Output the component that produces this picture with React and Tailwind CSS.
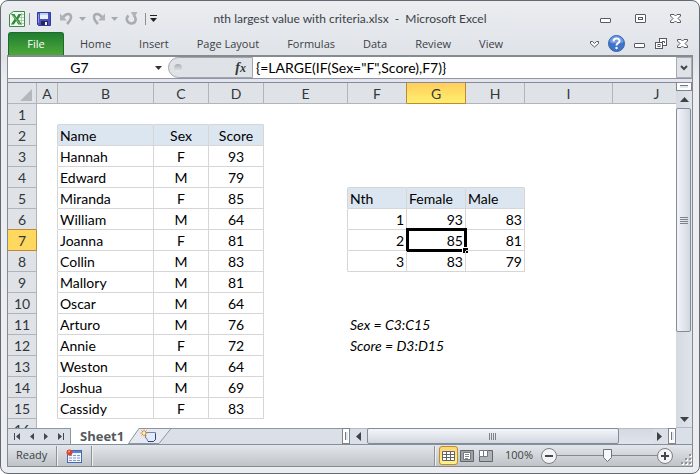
import { Fragment } from 'react';

const columns = [
  { id: 'A', width: 'w-[21px]' },
  { id: 'B', width: 'w-[96px]' },
  { id: 'C', width: 'w-[55px]' },
  { id: 'D', width: 'w-[55px]' },
  { id: 'E', width: 'w-[84px]' },
  { id: 'F', width: 'w-[59px]' },
  { id: 'G', width: 'w-[59px]' },
  { id: 'H', width: 'w-[59px]' },
  { id: 'I', width: 'w-[88px]' },
  { id: 'J', width: 'w-[88px]' },
];

const people = [
  ['Hannah', 'F', 93],
  ['Edward', 'M', 79],
  ['Miranda', 'F', 85],
  ['William', 'M', 64],
  ['Joanna', 'F', 81],
  ['Collin', 'M', 83],
  ['Mallory', 'M', 81],
  ['Oscar', 'M', 64],
  ['Arturo', 'M', 76],
  ['Annie', 'F', 72],
  ['Weston', 'M', 64],
  ['Joshua', 'M', 69],
  ['Cassidy', 'F', 83],
];

const ranking = [
  [1, 93, 83],
  [2, 85, 81],
  [3, 83, 79],
];

const cells = {};
const put = (ref, text, align, extra = {}) => {
  cells[ref] = { text, align, boxed: true, ...extra };
};

put('B2', 'Name', 'text-left', { head: true });
put('C2', 'Sex', 'text-center', { head: true });
put('D2', 'Score', 'text-center', { head: true });
people.forEach(([name, sex, score], i) => {
  put(`B${i + 3}`, name, 'text-left');
  put(`C${i + 3}`, sex, 'text-center');
  put(`D${i + 3}`, score, 'text-center');
});
put('F5', 'Nth', 'text-left', { head: true });
put('G5', 'Female', 'text-left', { head: true });
put('H5', 'Male', 'text-left', { head: true });
ranking.forEach((row, i) => {
  ['F', 'G', 'H'].forEach((col, j) => put(`${col}${i + 6}`, row[j], 'text-right'));
});
put('F11', 'Sex = C3:C15', 'text-left', { boxed: false, note: true });
put('F12', 'Score = D3:D15', 'text-left', { boxed: false, note: true });

const isBoxed = (col, row) => Boolean(columns[col] && cells[columns[col].id + row]?.boxed);

const Cell = ({ col, row }) => {
  const ref = columns[col].id + row;
  const cell = cells[ref];
  const right = isBoxed(col, row) || isBoxed(col + 1, row);
  const bottom = isBoxed(col, row) || isBoxed(col, row + 1);
  return (
    <td
      className={[
        'relative h-[21px] border-r border-b px-0.5 pt-0.5 pb-0 leading-[18px] whitespace-nowrap',
        right ? 'border-r-[#d6d6d6]' : 'border-r-transparent',
        bottom ? 'border-b-[#d6d6d6]' : 'border-b-transparent',
        cell?.head ? 'bg-[#dce6f1]' : '',
        cell?.note ? 'italic' : '',
        cell?.align ?? '',
      ].join(' ')}
    >
      {cell?.text}
      {ref === 'G7' && (
        <span className="absolute -top-0.5 -right-0.5 -bottom-0.5 -left-px border-3 border-black">
          <span className="absolute -right-1 -bottom-1 h-1.5 w-1.5 border-t border-l border-white bg-black" />
        </span>
      )}
    </td>
  );
};

const rowHeadClass = (row) => {
  if (row === 7) return 'bg-[#ffd860] border-r-[#c08a35] border-b-[#c08a35]';
  if (row === 6) return 'bg-[#dfe3e8] border-r-[#b1b5ba] border-b-[#c08a35]';
  return 'bg-[#dfe3e8] border-r-[#b1b5ba] border-b-[#b1b5ba]';
};

const colHeadClass = (id) => {
  if (id === 'G') return 'bg-linear-to-b from-[#ffce5c] to-[#ffef70] border-r-[#c08a35] border-b-[#c08a35]';
  if (id === 'F') return 'bg-[#dfe3e8] border-r-[#c08a35] border-b-[#b1b5ba]';
  return 'bg-[#dfe3e8] border-r-[#b1b5ba] border-b-[#b1b5ba]';
};

const Sheet = () => (
  <div className="min-w-0 flex-1 overflow-hidden bg-white">
    <table className="w-[693px] table-fixed border-separate border-spacing-0 font-['Lato',sans-serif] text-sm text-black">
      <thead>
        <tr className="text-[#33373c]">
          <th className="h-[21px] w-[29px] border-r border-b border-[#b1b5ba] bg-[#dfe3e8] p-0" aria-label="Select all">
            <svg className="mt-1 ml-3" width="12" height="12" aria-hidden="true">
              <path d="M12 0v12H0z" fill="#b4b8be" />
            </svg>
          </th>
          {columns.map(({ id, width }) => (
            <th key={id} scope="col" className={`h-[21px] border-r border-b p-0 pt-0.5 leading-[18px] font-normal ${width} ${colHeadClass(id)}`}>
              {id}
            </th>
          ))}
        </tr>
      </thead>
      <tbody>
        {Array.from({ length: 16 }, (_, i) => i + 1).map((row) => (
          <tr key={row}>
            <th scope="row" className={`h-[21px] border-r border-b p-0 pt-0.5 leading-[18px] font-normal text-[#33373c] ${rowHeadClass(row)}`}>
              {row}
            </th>
            {columns.map(({ id }, col) => (
              <Cell key={id} col={col} row={row} />
            ))}
          </tr>
        ))}
      </tbody>
    </table>
  </div>
);

const ExcelIcon = () => (
  <svg width="16" height="16" viewBox="0 0 16 16" aria-hidden="true">
    <path d="M4.500.5h11v15h-15v-12z" fill="#f4faf2" stroke="#3c8a4b" />
    <path d="M12.500 2v12M10 3.500h5M10 6.500h5M10 9.500h5M10 12.500h5" stroke="#a9cfa8" fill="none" />
    <path d="M2 3h3.500l2 3.500L9.500 3h3L9.200 8l3.600 5.500H9.300L7.200 10 5 13.500H1.800L5.500 8z" fill="#2f8a3d" />
    <path d="M3.500 4 10.500 12.500" stroke="#8ccf6d" strokeWidth="1" />
  </svg>
);

const SaveIcon = () => (
  <svg width="14" height="14" viewBox="0 0 14 14" aria-hidden="true">
    <path d="M.5.5h13v13h-12l-1-1z" fill="#4a52bd" stroke="#343a9a" />
    <path d="M3 1h8v6H3z" fill="#e8f0fb" />
    <path d="M3 1h8v2H3z" fill="#b8d2f2" />
    <path d="M4 9h7v4H4z" fill="#23275c" />
    <path d="M8 10h2v3H8z" fill="#f2f4fa" />
    <path d="M1 2h1v9H1z" fill="#8d95e6" />
  </svg>
);

const UndoIcon = ({ flip }) => (
  <svg width="13" height="13" viewBox="0 0 13 13" className={flip ? '-scale-x-100' : ''} aria-hidden="true">
    <path d="M3 5.500C6 1 11 1 11 5c0 2.500-1.500 4.500-4 7" fill="none" stroke="#a9acb1" strokeWidth="2.600" />
    <path d="M0 1.500v7h7z" fill="#b0b3b8" />
  </svg>
);

const RepeatIcon = () => (
  <svg width="13" height="13" viewBox="0 0 13 13" aria-hidden="true">
    <path d="M3.500 3.500C0 7 2.500 11.500 6.500 11.500S12 7 9 3.500" fill="none" stroke="#a9acb1" strokeWidth="2.600" />
    <path d="M6 0h6.500L9 6z" fill="#b0b3b8" />
  </svg>
);

const Down = ({ className }) => (
  <svg width="7" height="4" viewBox="0 0 7 4" className={className} aria-hidden="true">
    <path d="M0 0h7L3.500 4z" fill="currentColor" />
  </svg>
);

const MinimizeIcon = () => (
  <svg width="12" height="12" viewBox="0 0 12 12" fill="#fff" stroke="#565a66" aria-hidden="true">
    <rect x=".5" y="5.500" width="10" height="4" rx=".5" />
  </svg>
);

const MaximizeIcon = () => (
  <svg width="12" height="12" viewBox="0 0 12 12" fill="#fff" stroke="#565a66" aria-hidden="true">
    <rect x=".5" y="1.500" width="10" height="8" rx=".5" />
    <rect x="3.500" y="4.500" width="4" height="2" />
  </svg>
);

const RestoreIcon = () => (
  <svg width="13" height="12" viewBox="0 0 13 12" fill="#fff" stroke="#565a66" aria-hidden="true">
    <rect x="4.500" y=".5" width="7" height="7" />
    <path d="M7 3.500h2.500V5" fill="none" />
    <rect x=".5" y="4.500" width="7" height="6" />
    <rect x="3" y="6.500" width="2" height="2" />
  </svg>
);

const CloseIcon = () => (
  <svg width="12" height="12" viewBox="0 0 12 12" fill="#fff" stroke="#565a66" aria-hidden="true">
    <path d="M.5 1.500h3.500L5.500 3 7 1.500h3.500v1.500l-2.500 2.500 2.500 2.500v1.500H7L5.500 8 4 9.500H.5V8L3 5.500.5 3z" />
  </svg>
);

const ChevronIcon = () => (
  <svg width="9" height="8" viewBox="0 0 9 8" fill="#fff" stroke="#565a66" aria-hidden="true">
    <path d="M.5 1.500h2l2 2 2-2h2v2l-4 3.500-4-3.500z" />
  </svg>
);

const HelpIcon = () => (
  <svg width="17" height="17" viewBox="0 0 17 17" aria-hidden="true">
    <circle cx="8.500" cy="8.500" r="8" fill="#3f74c8" stroke="#3563b0" />
    <path d="M1.500 7a7 6 0 0 1 14 0c-4 2-10 2-14 0z" fill="#6d9ae0" />
    <path d="M5.500 6.500c0-4 6-4 6-.5 0 2-3 2-3 4.500" fill="none" stroke="#fff" strokeWidth="2" />
    <circle cx="8.500" cy="13" r="1.200" fill="#fff" />
  </svg>
);

const TitleBar = () => (
  <header className="grid h-[31px] grid-cols-[1fr_auto_1fr] items-center pt-1 text-[#3b3f46]">
    <div className="flex items-center pl-0.5">
      <ExcelIcon />
      <span className="ml-1 h-3 w-px bg-[#8a8e95]" />
      <button className="ml-[7px]" aria-label="Save"><SaveIcon /></button>
      <button className="ml-[9px]" aria-label="Undo"><UndoIcon /></button>
      <button className="ml-1.5 text-[#a6a9ae]" aria-label="Undo list"><Down /></button>
      <button className="ml-1.5" aria-label="Redo"><UndoIcon flip /></button>
      <button className="ml-1.5 text-[#a6a9ae]" aria-label="Redo list"><Down /></button>
      <button className="ml-[7px]" aria-label="Repeat"><RepeatIcon /></button>
      <span className="ml-[7px] h-3 w-px bg-[#8a8e95]" />
      <button className="ml-1" aria-label="Customize toolbar">
        <svg width="7" height="7" viewBox="0 0 7 7" aria-hidden="true">
          <path d="M0 0h7v1H0zM0 3h7L3.500 7z" fill="#222" />
        </svg>
      </button>
    </div>
    <h1 className="font-['Lato',sans-serif] text-xs whitespace-nowrap">
      nth largest value with criteria.xlsx&nbsp; -&nbsp; Microsoft Excel
    </h1>
    <div className="flex items-center justify-end gap-[23px] pr-[11px]">
      <button aria-label="Minimize"><MinimizeIcon /></button>
      <button aria-label="Maximize"><MaximizeIcon /></button>
      <button aria-label="Close"><CloseIcon /></button>
    </div>
  </header>
);

const RibbonTabs = () => (
  <nav className="flex h-[23px] items-center pl-px text-[11px] text-[#3b3f46]">
    <button className="mr-0.5 h-full w-14 rounded-t-[3px] border border-b-0 border-[#1c6b2c] bg-linear-to-b from-[#1f7e30] to-[#4da83a] text-white">
      File
    </button>
    {['Home', 'Insert', 'Page Layout', 'Formulas', 'Data', 'Review', 'View'].map((tab) => (
      <button key={tab} className="px-3.5 pt-0.5 whitespace-nowrap">{tab}</button>
    ))}
    <div className="ml-auto flex items-center gap-[9px] pr-1">
      <button aria-label="Collapse ribbon"><ChevronIcon /></button>
      <button aria-label="Help"><HelpIcon /></button>
      <button aria-label="Minimize workbook"><MinimizeIcon /></button>
      <button aria-label="Restore workbook"><RestoreIcon /></button>
      <button aria-label="Close workbook"><CloseIcon /></button>
    </div>
  </nav>
);

const FormulaBar = () => (
  <div className="flex h-[22px] border-b border-[#9296a0] bg-white font-['Lato',sans-serif] text-sm text-black">
    <input aria-label="Name box" defaultValue="G7" className="w-[143px] text-center outline-none" />
    <button aria-label="Named ranges" className="w-[17px] text-[#333]"><Down className="ml-1" /></button>
    <div className="flex w-[85px] items-center justify-between rounded-l-full border border-[#a2a6ac] bg-[#dfe3e8] pr-1.5 pl-[5px]">
      <span className="h-2 w-2 rounded-full bg-linear-to-b from-[#a9adb3] to-[#eceef1]" />
      <button aria-label="Insert function" className="font-['Liberation_Serif',serif] text-sm leading-4 font-bold text-[#33373c] italic">
        f<span className="text-xs">x</span>
      </button>
    </div>
    <input
      aria-label="Formula"
      defaultValue={'{=LARGE(IF(Sex="F",Score),F7)}'}
      className="min-w-0 flex-1 pl-[3px] outline-none"
    />
    <button aria-label="Expand formula bar" className="w-4 border border-[#a9adb3] bg-[#dfe3e8]">
      <svg className="mx-auto" width="8" height="6" viewBox="0 0 8 6" aria-hidden="true">
        <path d="M1 1l3 3 3-3" fill="none" stroke="#44484e" strokeWidth="2" />
      </svg>
    </button>
  </div>
);

const VerticalScroll = () => (
  <div className="flex w-4 flex-col border-b border-[#b4bac4] bg-linear-to-r from-[#d5dae1] to-[#e0e4ec]">
    <div className="flex h-2 justify-center border border-t-0 border-[#80848c] bg-white pt-0.5">
      <span className="h-[3px] w-2 border-t border-[#777] bg-[#e4e6f4]" />
    </div>
    <button aria-label="Scroll up" className="flex h-[17px] items-center justify-center">
      <svg width="9" height="5" aria-hidden="true"><path d="M4.500 0 9 5H0z" fill="#3e4146" /></svg>
    </button>
    <div className="min-h-0 flex-1">
      <div className="mr-px flex h-[74%] flex-col items-center justify-center gap-px rounded-[2px] border border-[#838d99] bg-linear-to-r from-[#f3f5f9] to-[#d3d8e0]">
        {[0, 1, 2, 3].map((i) => <span key={i} className="h-px w-2 bg-[#7d8289]" />)}
      </div>
    </div>
    <button aria-label="Scroll down" className="flex h-4 items-center justify-center">
      <svg width="9" height="5" aria-hidden="true"><path d="M0 0h9L4.500 5z" fill="#3e4146" /></svg>
    </button>
  </div>
);

const navIcons = [
  { label: 'First sheet', d: 'M0 0h1v7H0zM6 0v7L2 3.500z' },
  { label: 'Previous sheet', d: 'M5 0v7L1 3.500z' },
  { label: 'Next sheet', d: 'M1 0v7l4-3.500z' },
  { label: 'Last sheet', d: 'M5 0h1v7H5zM0 0v7l4-3.500z' },
];

const SplitHandle = () => (
  <div className="flex w-2 items-center justify-center border border-[#80848c] bg-white">
    <span className="h-2 w-[3px] border-l border-[#777] bg-[#e4e6f4]" />
  </div>
);

const SheetTabs = () => (
  <div className="flex h-4 bg-[#dbe0e8]">
    <div className="flex w-[334px] max-w-1/2 shrink-0 border-t border-[#8d97a3]">
      <div className="flex w-[63px] items-center justify-between border-r border-[#8d97a3] px-1.5">
        {navIcons.map(({ label, d }) => (
          <button key={label} aria-label={label}>
            <svg width="6" height="7" viewBox="0 0 6 7" aria-hidden="true"><path d={d} fill="#44484e" /></svg>
          </button>
        ))}
      </div>
      <button className="-mt-px bg-white pl-[9px] text-[13px] leading-4 font-bold text-[#55595e]">Sheet1</button>
      <button aria-label="Insert worksheet" className="-mt-px h-4">
        <svg width="52" height="16" viewBox="0 0 52 16" aria-hidden="true">
          <path d="M0 0h15L4 16H0z" fill="#fff" />
          <path d="M15 .5 4.500 15.500H35L47 .5z" fill="#e6eaf0" stroke="#8d97a3" />
          <path d="M21.500 4.500h10v7l-2 2h-5.500l-1.500-3.500h-1z" fill="#e3eafa" stroke="#7586b5" />
          <path d="M24 13.500h5.500l2-2v-6" fill="none" stroke="#32447d" />
          <path d="M20 1.500v7M16.500 5h7M17.500 2.500l5 5M22.500 2.500l-5 5" stroke="#d88a1c" />
          <circle cx="20" cy="5" r="1.500" fill="#fff0b0" />
        </svg>
      </button>
    </div>
    <div className="flex min-w-0 flex-1">
      <SplitHandle />
      <button aria-label="Scroll left" className="flex w-[17px] items-center justify-center border-t border-[#b4bac4]">
        <svg width="5" height="9" aria-hidden="true"><path d="M5 0v9L0 4.500z" fill="#3e4146" /></svg>
      </button>
      <div className="flex flex-1 border-t border-[#b4bac4] bg-linear-to-b from-[#d5dae1] to-[#e0e4ec]">
        <div className="-mt-px flex w-[88%] items-center justify-center gap-px rounded-[2px] border border-[#838d99] bg-linear-to-b from-[#f3f5f9] to-[#d3d8e0]">
          {[0, 1, 2, 3].map((i) => <span key={i} className="h-[7px] w-px bg-[#7d8289]" />)}
        </div>
      </div>
      <button aria-label="Scroll right" className="flex w-[15px] items-center border-t border-[#b4bac4] pl-1">
        <svg width="5" height="9" aria-hidden="true"><path d="M0 0v9l5-4.500z" fill="#3e4146" /></svg>
      </button>
      <SplitHandle />
    </div>
    <div className="w-4" />
  </div>
);

const StatusDivider = () => <span className="h-5 w-0.5 border-l border-[#8d9299] bg-[#eef0f3]" />;

const MacroIcon = () => (
  <svg width="16" height="14" viewBox="0 0 16 14" aria-hidden="true">
    <rect x="1.500" y="1.500" width="14" height="12" fill="#f3f6fc" stroke="#4668ad" />
    <path d="M2 2h13v2H2z" fill="#5a83d0" />
    <path d="M3 6.500h11M3 9h11M3 11.500h11" stroke="#8297c4" strokeDasharray="3 1" />
    <circle cx="3.500" cy="3.500" r="3" fill="#d9472f" />
    <circle cx="3" cy="2.500" r="1" fill="#f3a08e" />
  </svg>
);

const StatusBar = () => (
  <footer className="flex h-[22px] items-center border-t border-[#858f9b] bg-linear-to-b from-[#e3e6ea] to-[#bfc4c9] text-[11px] text-[#3b3f46]">
    <span className="w-12 pl-2">Ready</span>
    <StatusDivider />
    <button aria-label="Record macro" className="mr-[9px] ml-2"><MacroIcon /></button>
    <StatusDivider />
    <div className="ml-auto flex items-center">
      <StatusDivider />
      <button aria-label="Normal view" className="ml-[3px] flex h-[19px] w-[19px] items-center justify-center rounded-[3px] border border-[#c28c2c] bg-linear-to-b from-[#fcd675] to-[#fff18a]">
        <svg width="13" height="10" viewBox="0 0 13 10" aria-hidden="true">
          <path d="M.5.5h12v9H.5zM.5 3.500h12M.5 6.500h12M4.500.5v9M8.500.5v9" fill="#fff" stroke="#62656a" />
        </svg>
      </button>
      <button aria-label="Page layout view" className="ml-0.5">
        <svg width="14" height="12" viewBox="0 0 14 12" aria-hidden="true">
          <path d="M.5.5h13v11H.5z" fill="#9ea3a9" stroke="#62656a" />
          <path d="M3.500 2.500h7v7h-7z" fill="#fff" stroke="#77797e" />
          <path d="M5 4.500h4M5 6.500h4M5 8.500h3" stroke="#888" />
        </svg>
      </button>
      <button aria-label="Page break preview" className="ml-[5px]">
        <svg width="14" height="12" viewBox="0 0 14 12" aria-hidden="true">
          <path d="M.5.5h13v11H.5z" fill="#aeb3b9" stroke="#62656a" />
          <path d="M.5.5h4v6h-4zM4.500.5h4v6h-4z" fill="#fff" stroke="#77797e" />
        </svg>
      </button>
      <label htmlFor="zoom" className="ml-3">100%</label>
      <button aria-label="Zoom out" className="ml-2">
        <svg width="16" height="16" viewBox="0 0 16 16" aria-hidden="true">
          <circle cx="8" cy="8" r="7.500" fill="#f2f4f6" stroke="#7b8087" />
          <path d="M4 8h8" stroke="#44484e" strokeWidth="2" />
        </svg>
      </button>
      <div className="relative flex h-4 w-[100px] items-center justify-center">
        <span className="h-px flex-1 bg-[#858a91]" />
        <svg width="9" height="13" viewBox="0 0 9 13" aria-hidden="true">
          <path d="M.5.5h8v8l-4 4-4-4z" fill="#f7f8fa" stroke="#6d737b" />
        </svg>
        <span className="h-px flex-1 bg-[#858a91]" />
        <input id="zoom" type="range" min="10" max="190" defaultValue="100" className="absolute inset-0 w-full opacity-0" />
      </div>
      <button aria-label="Zoom in">
        <svg width="16" height="16" viewBox="0 0 16 16" aria-hidden="true">
          <circle cx="8" cy="8" r="7.500" fill="#f2f4f6" stroke="#7b8087" />
          <path d="M4 8h8M8 4v8" stroke="#44484e" strokeWidth="2" />
        </svg>
      </button>
      <svg className="mt-2 ml-2" width="11" height="11" viewBox="0 0 11 11" aria-hidden="true">
        {[[8, 0], [4, 4], [8, 4], [0, 8], [4, 8], [8, 8]].map(([x, y]) => (
          <Fragment key={`${x}-${y}`}>
            <rect x={x + 1} y={y + 1} width="2" height="2" fill="#fff" />
            <rect x={x} y={y} width="2" height="2" fill="#8e949b" />
          </Fragment>
        ))}
      </svg>
    </div>
  </footer>
);

export default function App() {
  return (
    <div className="flex h-screen flex-col overflow-hidden rounded-lg border border-[#646a73] bg-[#ebedf0] bg-linear-to-b from-[#ebedf0] via-[#dfe3e8] via-[55px] to-[#ebedf0] to-[80px] px-1.5 pb-1.5 font-['Open_Sans',sans-serif]">
      <TitleBar />
      <RibbonTabs />
      <main className="flex min-h-0 flex-1 flex-col border border-t-2 border-[#868b92]">
        <FormulaBar />
        <div className="h-1 border-b border-[#868b92] bg-[#e2e5f0]" />
        <div className="flex min-h-0 flex-1">
          <Sheet />
          <VerticalScroll />
        </div>
        <SheetTabs />
        <StatusBar />
      </main>
    </div>
  );
}
